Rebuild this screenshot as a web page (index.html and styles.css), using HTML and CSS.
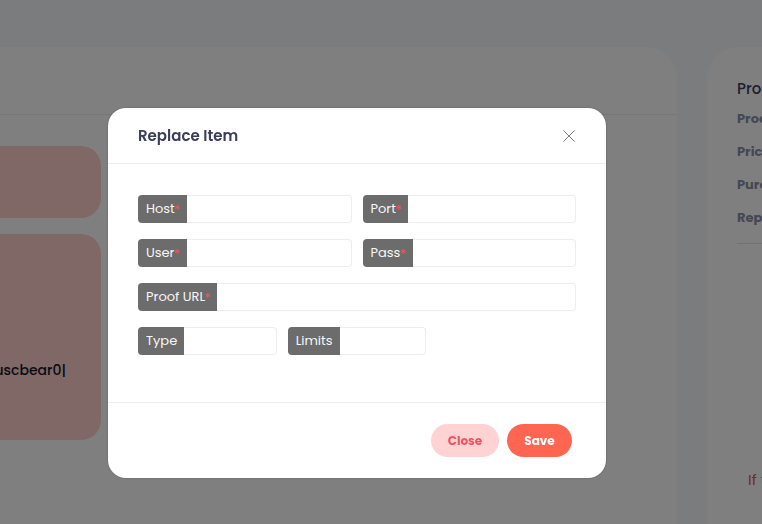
FILE: index.html
```html
<!DOCTYPE html>
<html lang="en">
<head>
    <meta charset="UTF-8">
    <meta name="viewport" content="width=device-width, initial-scale=1.0">
    <title>Proxies</title>
    <link rel="stylesheet" href="styles.css">
</head>
<body>
    <div class="top-bar"></div>

    <div class="layout">
        <div class="card main-card">
            <div class="card-head"></div>
            <div class="card-body">
                <div class="note note-small"></div>
                <div class="note note-big">
                    <span class="note-text">uscbear0|</span>
                </div>
            </div>
        </div>

        <div class="card side-card">
            <h3>Product</h3>
            <p class="side-row">Product</p>
            <p class="side-row">Price</p>
            <p class="side-row">Purchased</p>
            <p class="side-row">Replaced</p>
            <hr>
            <p class="side-warn">If the proxy does not work</p>
        </div>
    </div>

    <div class="backdrop">
        <div class="modal">
            <div class="modal-header">
                <h5>Replace Item</h5>
                <button class="btn-close" aria-label="Close">
                    <svg width="12" height="12" viewBox="0 0 12 12">
                        <path d="M0.5 0.5L11.5 11.5M11.5 0.5L0.5 11.5" stroke="#7a7a7a" stroke-width="1" fill="none"/>
                    </svg>
                </button>
            </div>

            <div class="modal-body">
                <div class="row cols-2">
                    <div class="field"><span class="label">Host<i>*</i></span><input type="text"></div>
                    <div class="field"><span class="label">Port<i>*</i></span><input type="text"></div>
                </div>
                <div class="row cols-2">
                    <div class="field"><span class="label">User<i>*</i></span><input type="text"></div>
                    <div class="field"><span class="label">Pass<i>*</i></span><input type="text"></div>
                </div>
                <div class="row">
                    <div class="field"><span class="label">Proof URL<i>*</i></span><input type="text"></div>
                </div>
                <div class="row cols-3">
                    <div class="field"><span class="label">Type</span><input type="text"></div>
                    <div class="field"><span class="label">Limits</span><input type="text"></div>
                </div>
            </div>

            <div class="modal-footer">
                <button class="btn btn-light">Close</button>
                <button class="btn btn-save">Save</button>
            </div>
        </div>
    </div>
</body>
</html>
```

FILE: styles.css
```css
body {
    margin: 0;
    font-family: Poppins, Inter, "Open Sans", sans-serif;
    background-color: #f6f8fa;
    color: #0e1726;
    overflow: hidden;
    height: 524px;
}

.top-bar {
    height: 47px;
}

.layout {
    display: flex;
    gap: 30px;
    margin-left: -40px;
}

.card {
    background-color: #fff;
    height: 477px;
}

.main-card {
    width: 717px;
    flex-shrink: 0;
    border-top-right-radius: 32px;
}

.card-head {
    height: 67px;
    border-bottom: 1px solid #eceef2;
}

.card-body {
    padding-top: 31px;
}

.note {
    width: 141px;
    background-color: #fed0cc;
    border-radius: 0 20px 20px 0;
    margin-bottom: 16px;
}

.note-small {
    height: 72px;
}

.note-big {
    height: 206px;
    padding-top: 123px;
    box-sizing: border-box;
    text-align: right;
}

.note-text {
    display: inline-block;
    font-size: 14px;
    font-weight: 500;
    color: #0e1726;
    margin-right: 35px;
}

.side-card {
    flex: 1;
    min-width: 0;
    overflow: hidden;
    border-top-left-radius: 32px;
    padding: 30px 0 0 30px;
}

.side-card h3 {
    margin: 0 0 9px;
    font-size: 15px;
    font-weight: 500;
    color: #3b3f5c;
    white-space: nowrap;
}

.side-row {
    margin: 0 0 13px;
    font-size: 13px;
    font-weight: 700;
    color: #888ea8;
    line-height: 20px;
    white-space: nowrap;
}

.side-card hr {
    border: none;
    border-top: 1px solid #e0e6ed;
    margin: 15px 0 0;
}

.side-warn {
    margin: 224px 0 0 11px;
    font-size: 15px;
    color: #e7515a;
    white-space: nowrap;
}

/* modal */
.backdrop {
    position: fixed;
    inset: 0;
    background-color: rgba(0, 0, 0, 0.5);
    padding: 108px 0 0 108px;
}

.modal {
    width: 498px;
    background-color: #fff;
    border-radius: 18px;
    box-shadow: 0 0 2px rgba(0, 0, 0, 0.3);
}

.modal-header {
    height: 55px;
    display: flex;
    align-items: center;
    justify-content: space-between;
    padding: 0 31px 0 30px;
    border-bottom: 1px solid #ebedf2;
}

.modal-header h5 {
    margin: 0;
    font-size: 15px;
    font-weight: 600;
    color: #3b3f5c;
}

.btn-close {
    border: none;
    background: none;
    padding: 0;
    width: 12px;
    height: 12px;
    display: flex;
}

.modal-body {
    padding: 31px 30px 47px;
    display: flex;
    flex-direction: column;
    gap: 16px;
    border-bottom: 1px solid #ebedf2;
}

.row {
    display: grid;
    grid-template-columns: minmax(0, 1fr);
    gap: 11px;
}

.row.cols-2 {
    grid-template-columns: repeat(2, minmax(0, 1fr));
}

.row.cols-3 {
    grid-template-columns: repeat(3, minmax(0, 1fr));
}

.field {
    display: flex;
    height: 28px;
    min-width: 0;
}

.label {
    display: flex;
    align-items: center;
    padding: 0 7px 0 8px;
    background-color: #6c6c6c;
    color: #f7f7f7;
    font-size: 13px;
    border-radius: 4px 0 0 4px;
    white-space: nowrap;
}

.label i {
    font-style: normal;
    color: #ff4b55;
    margin-left: -1px;
    align-self: flex-start;
    padding-top: 5px;
}

.field input {
    flex: 1;
    width: 0;
    min-width: 0;
    border: 1px solid #ebedf2;
    border-left: none;
    border-radius: 0 4px 4px 0;
    padding: 0 8px;
    outline: none;
}

.modal-footer {
    height: 75px;
    display: flex;
    align-items: center;
    justify-content: flex-end;
    gap: 8px;
    padding-right: 34px;
}

.btn {
    height: 33px;
    border: none;
    border-radius: 17px;
    font-family: inherit;
    font-size: 12px;
    font-weight: 700;
    cursor: pointer;
}

.btn-light {
    width: 68px;
    background-color: #ffd3d3;
    color: #f0545a;
}

.btn-save {
    width: 65px;
    background-color: #ff6651;
    color: #fff;
}
```
